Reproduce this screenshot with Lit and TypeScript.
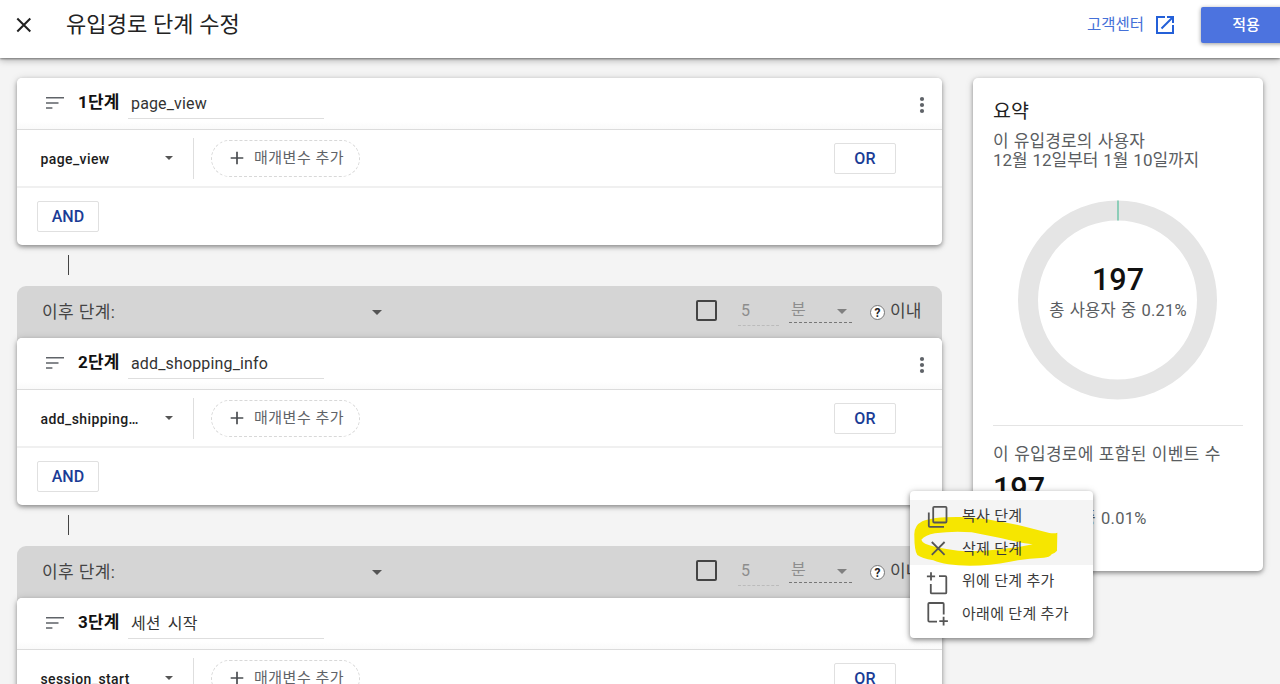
import {css, html, LitElement, svg} from 'lit';
import {customElement, property} from 'lit/decorators.js';

interface Step {
  index: number;
  name: string;
  event: string;
}

const STEPS: Step[] = [
  { index: 1, name: 'page_view', event: 'page_view' },
  { index: 2, name: 'add_shopping_info', event: 'add_shipping…' },
  { index: 3, name: '세션 시작', event: 'session_start' },
];

@customElement('funnel-step')
export class FunnelStep extends LitElement {
  static override styles = css`
      :host {
          display: block;
          position: relative;
          height: 167px;
          flex: none;
          background: white;
          border-radius: 5px;
          box-shadow: 0 2px 4px rgba(0, 0, 0, 0.36), 0 1px 8px rgba(0, 0, 0, 0.14);
      }

      .head {
          display: flex;
          align-items: center;
          height: 52px;
          box-sizing: border-box;
          padding: 0 8px 1px 26px;
          border-bottom: 1px solid #dcdcdc;
          background: linear-gradient(white 85%, #fafafa);
          border-radius: 5px 5px 0 0;
      }

      .head svg {
          fill: #5f6368;
      }

      .index {
          width: 50px;
          margin-left: 11px;
          font-size: 17px;
          font-weight: 700;
          line-height: 24px;
          letter-spacing: 0.2px;
          color: #111;
          padding-bottom: 3px;
      }

      .name {
          width: 193px;
          height: 30px;
          line-height: 31px;
          padding-left: 3px;
          border-bottom: 1px solid #dedede;
          font-size: 16px;
          letter-spacing: 0.15px;
          word-spacing: 3px;
          color: #333;
      }

      .kebab {
          margin-left: auto;
          margin-top: 3px;
      }

      .row {
          display: flex;
          align-items: center;
          height: 58px;
          box-sizing: border-box;
          padding: 0 46px 0 23.5px;
          border-bottom: 2px solid #f0f0f0;
      }

      .event {
          width: 124px;
          font-size: 14px;
          font-weight: 500;
          letter-spacing: 0.4px;
          color: #1c1c1c;
          padding-top: 2px;
      }

      .arrow {
          border: 4.5px solid transparent;
          border-top-color: #555;
          border-bottom: none;
      }

      .divider {
          width: 1px;
          height: 41px;
          background: #dedede;
          margin-left: 20.5px;
      }

      .chip {
          display: flex;
          align-items: center;
          width: 149px;
          height: 37px;
          box-sizing: border-box;
          margin-left: 17px;
          padding-left: 18px;
          border: 1px dashed #d8d8d8;
          border-radius: 19px;
          font-size: 15px;
          letter-spacing: 0.5px;
          color: #5f6368;
          gap: 10px;
      }

      .chip svg {
          stroke: #4a4d51;
          stroke-width: 1.7;
      }

      .chip span {
          padding-bottom: 3px;
          white-space: nowrap;
      }

      .button {
          width: 62px;
          height: 31px;
          box-sizing: border-box;
          border: 1px solid #e0e0e0;
          border-radius: 2px;
          text-align: center;
          line-height: 30px;
          font-size: 16px;
          font-weight: 500;
          letter-spacing: 0.1px;
          color: #1a3c96;
      }

      .or {
          margin-left: auto;
      }

      .foot {
          display: flex;
          align-items: center;
          height: 56px;
          padding-left: 20px;
      }
  `;

  @property({ attribute: false })
  step: Step = STEPS[0];

  override render() {
    return html`
      <div class="head">
        <svg width="24" height="24" viewBox="0 0 24 24">
          <path d="M3 6.1h18v1.5H3zM3 11.2h12.5v1.5H3zM3 16.3h6.4v1.5H3z"/>
        </svg>
        <div class="index">${this.step.index}단계</div>
        <div class="name">${this.step.name}</div>
        <svg class="kebab" width="24" height="24" viewBox="0 0 24 24">
          <circle cx="12" cy="6" r="2.1"/>
          <circle cx="12" cy="12" r="2.1"/>
          <circle cx="12" cy="18" r="2.1"/>
        </svg>
      </div>
      <div class="row">
        <div class="event">${this.step.event}</div>
        <i class="arrow"></i>
        <div class="divider"></div>
        <div class="chip">
          <svg width="14" height="14" viewBox="0 0 14 14"><path d="M7 .7v12.6M.7 7h12.6"/></svg>
          <span>매개변수 추가</span>
        </div>
        <div class="button or">OR</div>
      </div>
      <div class="foot"><div class="button">AND</div></div>
    `;
  }
}

@customElement('step-link')
export class StepLink extends LitElement {
  static override styles = css`
      :host {
          display: block;
          flex: none;
      }

      .line {
          width: 1px;
          height: 20px;
          margin: 10px 0 11px 51px;
          background: #444;
      }

      .bar {
          display: flex;
          align-items: center;
          height: 52px;
          box-sizing: border-box;
          padding: 0 21px 2px 25px;
          background: #d5d5d5;
          border-radius: 9px 9px 0 0;
          /* fills the corner gaps of the card underneath */
          box-shadow: 0 5px 0 #d5d5d5;
          font-size: 16px;
          color: #444;
      }

      .label {
          width: 330px;
          padding-bottom: 2px;
          font-size: 17px;
          letter-spacing: 0.4px;
      }

      .arrow {
          border: 5px solid transparent;
          border-top-color: #555;
          border-bottom: none;
          margin-top: 2px;
      }

      .check {
          width: 17px;
          height: 17px;
          border: 2px solid #444;
          border-radius: 2px;
          margin: 0 0 2px auto;
      }

      .amount {
          width: 38px;
          height: 27px;
          line-height: 26px;
          margin: 2px 0 0 21px;
          padding-left: 3px;
          border-bottom: 1px dashed #bbb;
          color: #8d8d8d;
      }

      .unit {
          display: flex;
          align-items: center;
          justify-content: space-between;
          width: 56px;
          height: 23px;
          line-height: 20px;
          margin: 0 0 1px 10px;
          padding: 0 5px 0 2px;
          border-bottom: 1px dashed #777;
          color: #8d8d8d;
      }

      .unit .arrow {
          border-top-color: #808080;
          margin-top: 2px;
      }

      .help {
          width: 13px;
          height: 13px;
          line-height: 14px;
          border: 1px solid #777;
          border-radius: 50%;
          margin: 3px 5px 0 18px;
          background: white;
          text-align: center;
          font-size: 12px;
          font-weight: 700;
          color: #222;
      }

      .within {
          width: 31px;
          white-space: nowrap;
          font-size: 17px;
          padding-bottom: 4px;
      }
  `;

  override render() {
    return html`
      <div class="line"></div>
      <div class="bar">
        <span class="label">이후 단계:</span>
        <i class="arrow"></i>
        <span class="check"></span>
        <span class="amount">5</span>
        <span class="unit">분<i class="arrow"></i></span>
        <span class="help">?</span>
        <span class="within">이내</span>
      </div>
    `;
  }
}

@customElement('funnel-summary')
export class FunnelSummary extends LitElement {
  static override styles = css`
      :host {
          display: block;
          width: 290px;
          height: 493px;
          box-sizing: border-box;
          padding: 22px 20px 0 20px;
          background: white;
          border-radius: 5px;
          box-shadow: 0 2px 4px rgba(0, 0, 0, 0.36), 0 1px 8px rgba(0, 0, 0, 0.14);
          color: #5a5d61;
          font-size: 17px;
          letter-spacing: 0.1px;
          word-spacing: 0.8px;
          white-space: nowrap;
      }

      .title {
          font-size: 19.5px;
          line-height: 24px;
          color: #222;
          margin-bottom: 8px;
      }

      .text {
          line-height: 19px;
      }

      .range {
          letter-spacing: -0.05px;
      }

      .donut {
          display: grid;
          justify-items: center;
          align-content: center;
          height: 200px;
          margin-top: 30px;
      }

      .donut svg {
          grid-area: 1 / 1;
      }

      .center {
          grid-area: 1 / 1;
          text-align: center;
          padding-top: 62px;
      }

      .value {
          font-size: 30.5px;
          font-weight: 500;
          line-height: 36px;
          letter-spacing: 0;
          color: #111;
      }

      .center .text {
          line-height: 26px;
          font-size: 16.5px;
          letter-spacing: 0.2px;
      }

      .total {
          margin-top: 25px;
          padding-top: 19px;
          border-top: 1px solid #e4e4e4;
      }

      .total .text {
          letter-spacing: 0.25px;
      }

      .total .value {
          margin: 7px 0 0 0;
      }

      .total .share {
          font-size: 16.5px;
          line-height: 24px;
          letter-spacing: 0.25px;
      }
  `;

  @property({ type: Number })
  percent = 0.21;

  override render() {
    return html`
      <div class="title">요약</div>
      <div class="text">이 유입경로의 사용자</div>
      <div class="text range">12월 12일부터 1월 10일까지</div>
      <div class="donut">
        <svg width="200" height="200" viewBox="0 0 200 200">
          <circle cx="99.5" cy="100" r="89.5" fill="none" stroke="#e5e5e5" stroke-width="20"/>
          <path d="M100 .5v20" stroke="#67c3a5" stroke-width="1.4"/>
        </svg>
        <div class="center">
          <div class="value">197</div>
          <div class="text">총 사용자 중 ${this.percent}%</div>
        </div>
      </div>
      <div class="total">
        <div class="text">이 유입경로에 포함된 이벤트 수</div>
        <div class="value">197</div>
        <div class="share">전체 이벤트 중 0.01%</div>
      </div>
    `;
  }
}

const MENU_ITEMS = [
  {
    label: '복사 단계',
    hover: true,
    icon: svg`<rect x="7.2" y="2.8" width="13.3" height="15.7" rx="1"/><path d="M2.8 8.5v13.3q0 1 1 1H18"/>`,
  },
  { label: '삭제 단계', hover: true, icon: svg`<path d="M5.8 6l12.8 12.8M18.6 6L5.8 18.8"/>` },
  {
    label: '위에 단계 추가',
    hover: false,
    icon: svg`<path d="M5 3.2v8.4M.9 7.4h8.2M13 7.2h6.3q1 0 1 1v15.2q0 1-1 1H5.8q-1 0-1-1V15"/>`,
  },
  {
    label: '아래에 단계 추가',
    hover: false,
    icon: svg`<path d="M17.7 13.5V3q0-1-1-1H3.3q-1 0-1 1v16.6q0 1 1 1H11M17.6 15.8v8.6M13.3 20.1h8.6"/>`,
  },
];

@customElement('step-menu')
export class StepMenu extends LitElement {
  static override styles = css`
      :host {
          display: block;
          width: 183px;
          height: 147px;
          box-sizing: border-box;
          padding-top: 8.5px;
          background: white;
          border-radius: 4px;
          box-shadow: 0 2px 5px rgba(0, 0, 0, 0.4), 0 1px 8px rgba(0, 0, 0, 0.15);
      }

      .item {
          display: flex;
          align-items: center;
          height: 32.5px;
          padding-left: 16px;
          gap: 12px;
          font-size: 15px;
          letter-spacing: 0.3px;
          color: #3a3a3a;
          white-space: nowrap;
      }

      .item.hover {
          background: #f4f4f4;
      }

      .item svg {
          position: relative;
          z-index: 2;
          overflow: visible;
          fill: none;
          stroke: #555;
          stroke-width: 1.8;
      }

      .item span {
          position: relative;
          z-index: 2;
          padding-bottom: 2px;
      }

      .marker {
          position: absolute;
          left: 3px;
          top: 23.5px;
          z-index: 1;
          fill: #f6e600;
      }
  `;

  override render() {
    return html`
      ${MENU_ITEMS.map((item) => html`
        <div class="item ${item.hover ? 'hover' : ''}">
          <svg width="24" height="24" viewBox="0 0 24 24">${item.icon}</svg>
          <span>${item.label}</span>
        </div>
      `)}
      <svg class="marker" width="146" height="53" viewBox="99 253 438 159">
        <path fill-rule="evenodd" d="M103 315Q101 285 127 272Q160 258 240 259Q300 261 345 270Q400 278 450 292
          L508 307Q525 309 532 306L531 360Q526 366 515 371Q508 381 492 381Q440 383 390 393Q330 405 270 405
          Q195 405 160 389Q125 383 112 373Q103 360 103 315Z
          M124 327Q136 313 165 308Q220 300 275 305Q320 314 365 323Q420 337 458 341Q430 348 385 353Q320 362 262 362
          Q205 358 165 348Q127 340 124 327Z"/>
      </svg>
    `;
  }
}

@customElement('app-root')
export class AppRoot extends LitElement {
  static override styles = css`
      :host {
          display: flex;
          flex-direction: column;
          position: relative;
          width: 1280px;
          height: 684px;
          overflow: hidden;
          background: #f4f4f4;
          font-family: Roboto, 'Noto Sans CJK KR', sans-serif;
      }

      .header {
          display: flex;
          align-items: center;
          height: 58px;
          flex: none;
          box-sizing: border-box;
          padding: 0 0 9px 12px;
          background: white;
          box-shadow: 0 1px 2px rgba(0, 0, 0, 0.4), 0 2px 7px rgba(0, 0, 0, 0.3);
          z-index: 1;
      }

      .close {
          stroke: #222;
          stroke-width: 2;
      }

      h1 {
          margin: 0 0 0 30px;
          padding-bottom: 5px;
          font-size: 22px;
          font-weight: 400;
          letter-spacing: 0.1px;
          color: #222;
      }

      .help {
          margin-left: auto;
          padding-bottom: 3px;
          font-size: 15.5px;
          color: #4470d8;
      }

      .open {
          margin: 0 24px 0 9px;
          fill: #2460d8;
      }

      .apply {
          width: 90px;
          height: 36px;
          line-height: 36px;
          margin: 1px -11px 0 0;
          border-radius: 2px;
          background: #4c73df;
          box-shadow: 0 1px 4px rgba(0, 0, 0, 0.4);
          text-align: center;
          font-size: 15px;
          font-weight: 500;
          color: white;
      }

      .content {
          display: flex;
          align-items: flex-start;
          gap: 31px;
          padding: 20px 17px 0 17px;
      }

      .steps {
          display: flex;
          flex-direction: column;
          width: 925px;
      }

      step-menu {
          position: absolute;
          left: 910px;
          top: 491px;
          z-index: 2;
      }
  `;

  override render() {
    return html`
      <div class="header">
        <svg class="close" width="24" height="24" viewBox="0 0 24 24">
          <path d="M5.3 5.5l13 13M18.3 5.5l-13 13"/>
        </svg>
        <h1>유입경로 단계 수정</h1>
        <span class="help">고객센터</span>
        <svg class="open" width="24" height="24" viewBox="0 0 24 24">
          <path d="M19 19H5V5h7V3H3v18h18v-9h-2v7zM14 3v2h3.6l-9.8 9.8 1.4 1.4L19 6.4V10h2V3h-7z"/>
        </svg>
        <div class="apply">적용</div>
      </div>
      <div class="content">
        <div class="steps">
          ${STEPS.map((step) => html`
            ${step.index > 1 ? html`<step-link></step-link>` : ''}
            <funnel-step .step=${step}></funnel-step>
          `)}
        </div>
        <funnel-summary></funnel-summary>
      </div>
      <step-menu></step-menu>
    `;
  }
}

declare global {
  interface HTMLElementTagNameMap {
    'app-root': AppRoot;
    'funnel-step': FunnelStep;
    'step-link': StepLink;
    'funnel-summary': FunnelSummary;
    'step-menu': StepMenu;
  }
}
